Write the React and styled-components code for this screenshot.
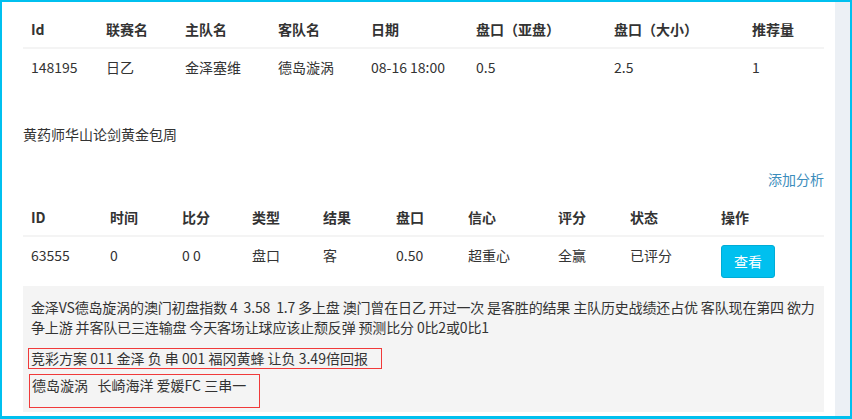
import React from 'react';
import styled, { createGlobalStyle } from 'styled-components';

const GlobalStyle = createGlobalStyle`
  html, body { margin: 0; padding: 0; background: #fff; }
  body {
    font-family: "Noto Sans CJK SC", "Noto Sans", sans-serif;
    font-size: 14px;
    line-height: 20px;
    color: #333;
  }
`;

const Frame = styled.div`
  width: 852px;
  height: 419px;
  box-sizing: border-box;
  border: 2px solid #00c0ef;
  border-bottom-width: 3px;
  display: flex;
  overflow: hidden;
`;

const Panel = styled.main`
  flex: 1;
  min-width: 0;
  background: #fff;
  padding: 9px 11px 0 21px;
  overflow: hidden;
  box-shadow: 1px 0 1px rgba(0, 0, 0, 0.06);
`;

const Rail = styled.aside`
  width: 15px;
  flex: none;
  background: #ecf0f5;
`;

const Table = styled.table`
  width: 801px;
  border-collapse: collapse;
  table-layout: fixed;
  margin-top: ${p => p.$top || 0}px;
`;

const Th = styled.th`
  text-align: left;
  font-weight: 700;
  padding: 8px;
  line-height: 20px;
  white-space: nowrap;
  border-bottom: 2px solid #f4f4f4;
  width: ${p => p.$w}px;
  box-sizing: border-box;
`;

const Td = styled.td`
  padding: 8px;
  line-height: 20px;
  vertical-align: top;
  white-space: nowrap;
  border-top: 1px solid #f4f4f4;
`;

const Title = styled.div`
  margin-top: 39px;
`;

const LinkRow = styled.div`
  margin-top: 25px;
  text-align: right;
`;

const Link = styled.a`
  color: #3c8dbc;
  text-decoration: none;
  cursor: pointer;
`;

const ViewButton = styled.button`
  font: inherit;
  font-size: 14px;
  line-height: 19px;
  color: #fff;
  background: #00c0ef;
  border: 1px solid #00acd6;
  border-radius: 3px;
  padding: 6px 12px;
  cursor: pointer;
`;

const Notes = styled.div`
  width: 801px;
  box-sizing: border-box;
  background: #f4f4f4;
  padding: 11px 2px 4px 5px;
`;

const Summary = styled.p`
  margin: 0;
  padding-left: 3px;
  white-space: pre-wrap;
  letter-spacing: -0.15px;
`;

const Plan = styled.div`
  width: fit-content;
  border: 1px solid #f03a3a;
  padding: 0 13px ${p => p.$tall ? 12 : 0}px 2px;
  line-height: ${p => p.$tall ? 20 : 19}px;
  margin-top: ${p => p.$gap}px;
  margin-left: ${p => p.$shift || 0}px;
  white-space: pre;
`;

const matchCols = [
  ['Id', 75], ['联赛名', 79], ['主队名', 93], ['客队名', 93], ['日期', 105],
  ['盘口（亚盘）', 138], ['盘口（大小）', 138], ['推荐量', 80],
];
const matchRow = ['148195', '日乙', '金泽塞维', '德岛漩涡', '08-16 18:00', '0.5', '2.5', '1'];

const tipCols = [
  ['ID', 79], ['时间', 72], ['比分', 70], ['类型', 71], ['结果', 73],
  ['盘口', 72], ['信心', 90], ['评分', 72], ['状态', 91], ['操作', 111],
];
const tipRow = ['63555', '0', '0 0', '盘口', '客', '0.50', '超重心', '全赢', '已评分'];

const summary = '金泽VS德岛旋涡的澳门初盘指数 4  3.58  1.7 多上盘 澳门曾在日乙 开过一次 是客胜的结果 主队历史战绩还占优 客队现在第四 欲力争上游 并客队已三连输盘 今天客场让球应该止颓反弹 预测比分 0比2或0比1';

export default function App() {
  return (
    <>
      <GlobalStyle />
      <Frame>
        <Panel>
          <Table>
            <thead>
              <tr>{matchCols.map(([t, w]) => <Th key={t} $w={w}>{t}</Th>)}</tr>
            </thead>
            <tbody>
              <tr>{matchRow.map((v, i) => <Td key={i}>{v}</Td>)}</tr>
            </tbody>
          </Table>

          <Title>黄药师华山论剑黄金包周</Title>

          <LinkRow><Link>添加分析</Link></LinkRow>

          <Table $top={10}>
            <thead>
              <tr>{tipCols.map(([t, w]) => <Th key={t} $w={w}>{t}</Th>)}</tr>
            </thead>
            <tbody>
              <tr>
                {tipRow.map((v, i) => <Td key={i}>{v}</Td>)}
                <Td><ViewButton>查看</ViewButton></Td>
              </tr>
            </tbody>
          </Table>

          <Notes>
            <Summary>{summary}</Summary>
            <Plan $gap={11}>竞彩方案 011 金泽 负 串 001 福冈黄蜂 让负 3.49倍回报</Plan>
            <Plan $gap={5} $shift={1} $tall>德岛漩涡   长崎海洋 爱媛FC 三串一</Plan>
          </Notes>
        </Panel>
        <Rail />
      </Frame>
    </>
  );
}
